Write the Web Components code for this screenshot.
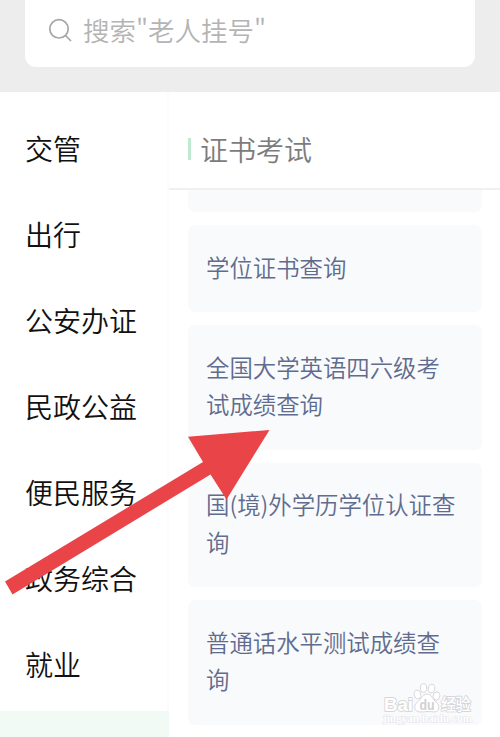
<!DOCTYPE html>
<html lang="zh-CN">
<head>
<meta charset="UTF-8">
<title>证书考试</title>
<style>
  body {
    margin: 0;
    height: 737px;
    overflow: hidden;
    background: #fff;
    font-family: 'Noto Sans CJK SC', sans-serif;
    font-weight: 350;
  }
</style>
</head>
<body>
<service-page>
  <search-bar slot="search">搜索"老人挂号"</search-bar>
  <nav-item slot="nav">交管</nav-item>
  <nav-item slot="nav">出行</nav-item>
  <nav-item slot="nav">公安办证</nav-item>
  <nav-item slot="nav">民政公益</nav-item>
  <nav-item slot="nav">便民服务</nav-item>
  <nav-item slot="nav">政务综合</nav-item>
  <nav-item slot="nav">就业</nav-item>
  <nav-item slot="nav" active></nav-item>
  <section-title slot="title">证书考试</section-title>
  <service-card clipped></service-card>
  <service-card>学位证书查询</service-card>
  <service-card>全国大学英语四六级考试成绩查询</service-card>
  <service-card>国(境)外学历学位认证查询</service-card>
  <service-card>普通话水平测试成绩查询</service-card>
  <pointer-arrow slot="overlay"></pointer-arrow>
  <brand-mark slot="overlay"></brand-mark>
</service-page>

<script>
class BaseElement extends HTMLElement {
  constructor() {
    super();
    this.attachShadow({ mode: 'open' });
  }

  connectedCallback() {
    this.shadowRoot.innerHTML = this.render();
  }
}

class ServicePage extends BaseElement {
  render() {
    return `
      <style>
        :host {
          display: flex;
          flex-direction: column;
          position: relative;
          width: 500px;
          height: 737px;
          overflow: hidden;
        }

        header {
          flex: none;
          height: 92px;
          background: #ededed;
        }

        .columns {
          display: flex;
          flex: 1;
          min-height: 0;
        }

        nav {
          flex: none;
          box-sizing: border-box;
          width: 169px;
          padding-top: 17px;
          border-right: 2px solid #fbfbfb;
        }

        main {
          flex: 1;
          min-width: 0;
        }

        .cards {
          display: flex;
          flex-direction: column;
          gap: 13px;
          padding: 0 18px 0 19px;
        }
      </style>
      <header><slot name="search"></slot></header>
      <div class="columns">
        <nav><slot name="nav"></slot></nav>
        <main>
          <slot name="title"></slot>
          <div class="cards"><slot></slot></div>
        </main>
      </div>
      <slot name="overlay"></slot>
    `;
  }
}

class SearchBar extends BaseElement {
  render() {
    return `
      <style>
        :host {
          display: flex;
          align-items: center;
          box-sizing: border-box;
          height: 67px;
          margin: 0 25px;
          padding: 0 0 8px 23px;
          gap: 10px;
          background: #fff;
          border-radius: 0 0 11px 11px;
          color: #b4b4b4;
          font-size: 26.5px;
          line-height: 40px;
        }

        svg {
          flex: none;
        }
      </style>
      <svg width="25" height="25" viewBox="0 0 25 25" fill="none" stroke="#a6a6a6" stroke-width="1.7">
        <circle cx="11" cy="11.8" r="9.2"/>
        <path d="M17.5 18.5 L23 24"/>
      </svg>
      <span><slot></slot></span>
    `;
  }
}

class NavItem extends BaseElement {
  render() {
    return `
      <style>
        :host {
          display: flex;
          align-items: center;
          box-sizing: border-box;
          height: 86px;
          padding: 0 0 8px 25px;
          color: #111;
          font-size: 28px;
          line-height: 40px;
        }

        :host([active]) {
          margin-right: -2px;
          background: #f1faf4;
        }
      </style>
      <slot></slot>
    `;
  }
}

class SectionTitle extends BaseElement {
  render() {
    return `
      <style>
        :host {
          display: flex;
          align-items: center;
          box-sizing: border-box;
          height: 98px;
          padding: 18px 0 0 19px;
          gap: 9px;
          border-bottom: 2px solid #f0f0f1;
          color: #7c7c7c;
          font-size: 28px;
          line-height: 40px;
        }

        i {
          width: 3px;
          height: 22px;
          background: #bfe9d0;
        }
      </style>
      <i></i><span><slot></slot></span>
    `;
  }
}

class ServiceCard extends BaseElement {
  render() {
    return `
      <style>
        :host {
          display: block;
          padding: 23.5px 19px 26px 18px;
          background: #f9fafc;
          border-radius: 7px;
          color: #5f6c8e;
          font-size: 23.4px;
          line-height: 37.5px;
        }

        /* card scrolled under the title, only its lower edge shows */
        :host([clipped]) {
          height: 22px;
          padding: 0;
          border-radius: 0 0 7px 7px;
        }
      </style>
      <slot></slot>
    `;
  }
}

class PointerArrow extends BaseElement {
  render() {
    return `
      <style>
        :host {
          display: block;
          position: absolute;
          left: 0;
          top: 420px;
        }

        svg {
          display: block;
        }
      </style>
      <svg width="280" height="180" viewBox="0 420 280 180">
        <polygon fill="#e94549" points="269.5,430 188,436.7 203,462 5,581.5 12.5,594.5 210.5,474.5 226.5,499.5"/>
      </svg>
    `;
  }
}

class BrandMark extends BaseElement {
  render() {
    return `
      <style>
        :host {
          display: block;
          position: absolute;
          left: 380px;
          top: 680px;
        }

        svg {
          display: block;
        }

        text {
          paint-order: stroke;
          stroke: #d6d6da;
          stroke-width: 1.8px;
          stroke-linejoin: round;
          fill: #fff;
          font-family: 'Liberation Sans', 'Noto Sans CJK SC', sans-serif;
          font-weight: 700;
        }
      </style>
      <svg width="100" height="50" viewBox="0 0 100 50">
        <g fill="#fff" stroke="#d8d8dc" stroke-width="1">
          <ellipse cx="37.5" cy="14.5" rx="3.3" ry="4.3" transform="rotate(-15 37.5 14.5)"/>
          <ellipse cx="43.5" cy="8" rx="3.2" ry="4.3"/>
          <ellipse cx="51.5" cy="8.5" rx="3.2" ry="4.3" transform="rotate(12 51.5 8.5)"/>
          <ellipse cx="56.5" cy="16" rx="3.3" ry="4" transform="rotate(20 56.5 16)"/>
          <path d="M47 14 C42 14 41 20 37.5 22 C33 25 34 32 40 32 C44 32 50 31 54 32 C60 32 60 25 56 22 C53 20 52 14 47 14 Z"/>
        </g>
        <text x="4" y="31" font-size="19" textLength="29" lengthAdjust="spacingAndGlyphs">Bai</text>
        <text x="39.5" y="30" font-size="14" textLength="15" lengthAdjust="spacingAndGlyphs" style="fill:#d0d0d5;stroke:none">du</text>
        <text x="61" y="30" font-size="15.5" textLength="30" style="font-weight:500">经验</text>
        <text x="3" y="42" font-size="10" textLength="89" lengthAdjust="spacingAndGlyphs" style="stroke:#e4e4e8;stroke-width:1px;font-family:'Liberation Serif',serif">jingyan.baidu.com</text>
      </svg>
    `;
  }
}

customElements.define('service-page', ServicePage);
customElements.define('search-bar', SearchBar);
customElements.define('nav-item', NavItem);
customElements.define('section-title', SectionTitle);
customElements.define('service-card', ServiceCard);
customElements.define('pointer-arrow', PointerArrow);
customElements.define('brand-mark', BrandMark);
</script>
</body>
</html>
